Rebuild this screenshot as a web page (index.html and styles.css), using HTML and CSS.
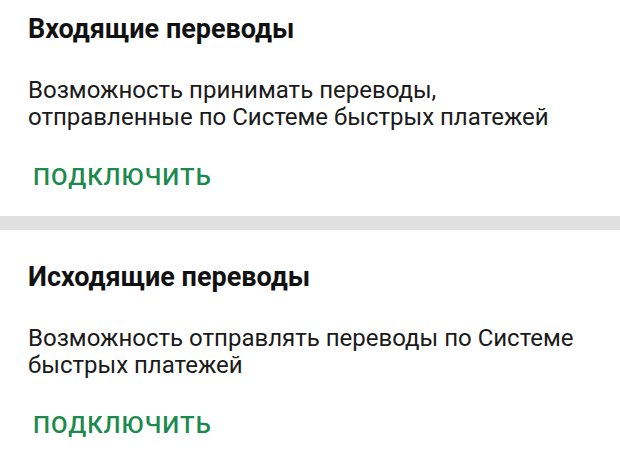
FILE: index.html
```html
<!DOCTYPE html>
<html lang="ru">

<head>
    <meta charset="UTF-8">
    <meta name="viewport" content="width=device-width, initial-scale=1.0">
    <title>Система быстрых платежей</title>
    <link rel="stylesheet" href="styles.css">
</head>

<body>

    <!-- Incoming transfers -->
    <section class="sbp-card sbp-card-first">
        <h2 class="sbp-title">Входящие переводы</h2>
        <p class="sbp-text">Возможность принимать переводы,<br>отправленные по Системе быстрых платежей</p>
        <button class="sbp-btn" type="button">Подключить</button>
    </section>

    <div class="divider"></div>

    <!-- Outgoing transfers -->
    <section class="sbp-card">
        <h2 class="sbp-title">Исходящие переводы</h2>
        <p class="sbp-text">Возможность отправлять переводы по Системе<br>быстрых платежей</p>
        <button class="sbp-btn" type="button">Подключить</button>
    </section>

</body>

</html>
```

FILE: styles.css
```css
/* Basic Reset */
* {
    margin: 0;
    padding: 0;
    box-sizing: border-box;
}

body {
    font-family: Roboto, "Noto Sans", Arial, sans-serif;
    background-color: #fff;
    color: #1a1a1a;
}

/* Cards */
.sbp-card {
    padding: 31px 28px 23px;
}

.sbp-card-first {
    padding-top: 13px;
}

.sbp-title {
    font-size: 27px;
    line-height: 32px;
    font-weight: 700;
    color: #111;
}

.sbp-text {
    margin-top: 32px;
    font-size: 24px;
    line-height: 27px;
    color: #1a1a1a;
}

.sbp-btn {
    display: block;
    margin-top: 30px;
    margin-left: 5px;
    background: none;
    border: none;
    font-family: inherit;
    font-size: 24px;
    line-height: 32px;
    font-weight: 500;
    letter-spacing: 1px;
    text-transform: uppercase;
    color: #1b8a4c;
    cursor: pointer;
}

.divider {
    height: 14px;
    background-color: #e0e0e0;
}
```
